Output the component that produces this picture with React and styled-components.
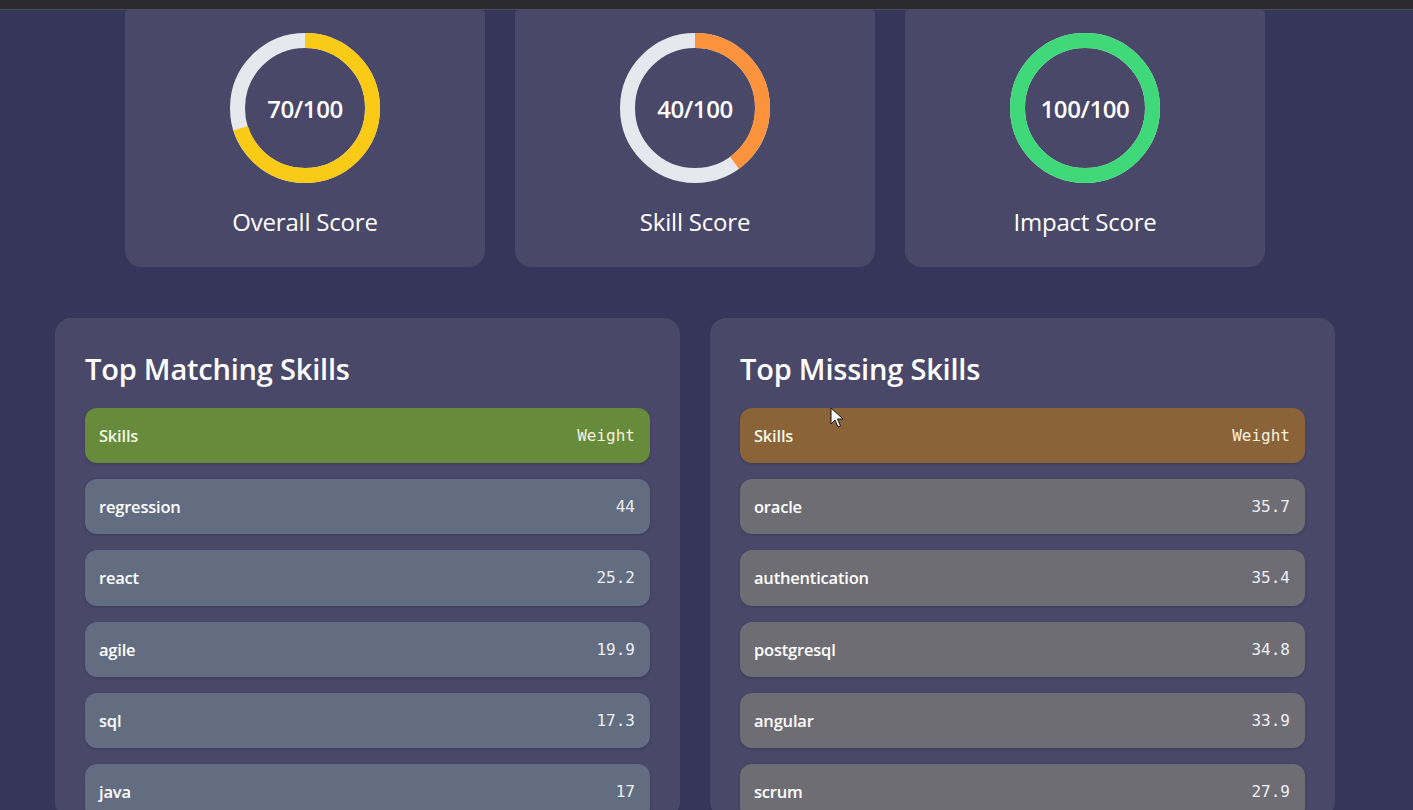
import styled, { createGlobalStyle } from "styled-components";

const GlobalStyle = createGlobalStyle`
  html, body {
    margin: 0;
    padding: 0;
    background: #36355a;
    overflow: hidden;
  }
  body {
    font-family: "Open Sans", "Noto Sans", sans-serif;
    color: #f4f4f6;
  }
`;

const TopBar = styled.div`
  height: 9px;
  background: #2b2b2e;
  border-bottom: 1px solid #4b4b52;
`;

const Page = styled.main`
  position: relative;
  width: 1390px;
  height: 800px;
  display: flex;
  flex-direction: column;
  align-items: center;
`;

const ScoreRow = styled.section`
  display: flex;
  gap: 30px;
`;

const ScoreCard = styled.div`
  width: 360px;
  box-sizing: border-box;
  padding: 23px 0 28px;
  background: #4a4869;
  border-radius: 4px 4px 16px 16px;
  display: flex;
  flex-direction: column;
  align-items: center;
`;

const RingWrap = styled.div`
  position: relative;
  width: 150px;
  height: 150px;
  display: flex;
  align-items: center;
  justify-content: center;
`;

const RingSvg = styled.svg`
  position: absolute;
  inset: 0;
  transform: rotate(-90deg);
`;

const ScoreValue = styled.span`
  position: relative;
  font-size: 24px;
  font-weight: 600;
  letter-spacing: -0.4px;
  color: #ffffff;
`;

const ScoreLabel = styled.div`
  margin-top: 22px;
  font-size: 24px;
  line-height: 34px;
  letter-spacing: -0.2px;
  color: #ffffff;
`;

const Panels = styled.section`
  margin-top: 51px;
  display: flex;
  gap: 30px;
`;

const Panel = styled.div`
  width: 625px;
  box-sizing: border-box;
  padding: 30px 30px 0;
  height: 500px;
  background: #4a4869;
  border-radius: 16px;
`;

const PanelTitle = styled.h2`
  margin: 0 0 18px;
  font-size: 29px;
  line-height: 42px;
  font-weight: 600;
  letter-spacing: -0.2px;
  color: #ffffff;
`;

const List = styled.div`
  display: flex;
  flex-direction: column;
  gap: 16px;
`;

const Row = styled.div`
  height: ${(p) => (p.$head ? "55px" : "55.3px")};
  box-sizing: border-box;
  padding: 0 15px 0 14px;
  display: flex;
  align-items: center;
  justify-content: space-between;
  border-radius: 12px;
  background: ${(p) => p.$bg};
  box-shadow: 0 1px 3px rgba(20, 20, 40, 0.25);
`;

const Name = styled.span`
  font-size: 16.5px;
  font-weight: 600;
  letter-spacing: -0.2px;
  color: ${(p) => (p.$head ? "#f1f6e4" : "#ffffff")};
`;

const Weight = styled.span`
  font-family: "DejaVu Sans Mono", "Liberation Mono", monospace;
  font-size: 16px;
  color: ${(p) => (p.$head ? "#f6f1df" : "#eeeef2")};
`;

const Cursor = styled.svg`
  position: absolute;
  left: 830px;
  top: 397px;
`;

const scores = [
  { value: 70, label: "Overall Score", color: "#f9ca16" },
  { value: 40, label: "Skill Score", color: "#fb923c" },
  { value: 100, label: "Impact Score", color: "#3fd97a" },
];

const matching = [
  ["regression", "44"],
  ["react", "25.2"],
  ["agile", "19.9"],
  ["sql", "17.3"],
  ["java", "17"],
];

const missing = [
  ["oracle", "35.7"],
  ["authentication", "35.4"],
  ["postgresql", "34.8"],
  ["angular", "33.9"],
  ["scrum", "27.9"],
];

function Ring({ value, color }) {
  const r = 67.5;
  const c = 2 * Math.PI * r;
  return (
    <RingSvg width="150" height="150" viewBox="0 0 150 150">
      <circle cx="75" cy="75" r={r} fill="none" stroke="#e7e7ee" strokeWidth="15" />
      <circle
        cx="75"
        cy="75"
        r={r}
        fill="none"
        stroke={color}
        strokeWidth="15"
        strokeDasharray={`${(c * value) / 100} ${c}`}
      />
    </RingSvg>
  );
}

function SkillPanel({ title, head, row, items }) {
  return (
    <Panel>
      <PanelTitle>{title}</PanelTitle>
      <List>
        <Row $bg={head} $head>
          <Name $head>Skills</Name>
          <Weight $head>Weight</Weight>
        </Row>
        {items.map(([name, w]) => (
          <Row key={name} $bg={row}>
            <Name>{name}</Name>
            <Weight>{w}</Weight>
          </Row>
        ))}
      </List>
    </Panel>
  );
}

export default function App() {
  return (
    <>
      <GlobalStyle />
      <TopBar />
      <Page>
        <ScoreRow>
          {scores.map((s) => (
            <ScoreCard key={s.label}>
              <RingWrap>
                <Ring value={s.value} color={s.color} />
                <ScoreValue>{s.value}/100</ScoreValue>
              </RingWrap>
              <ScoreLabel>{s.label}</ScoreLabel>
            </ScoreCard>
          ))}
        </ScoreRow>
        <Panels>
          <SkillPanel
            title="Top Matching Skills"
            head="#668b3a"
            row="#626d81"
            items={matching}
          />
          <SkillPanel
            title="Top Missing Skills"
            head="#8b6339"
            row="#6f6d74"
            items={missing}
          />
        </Panels>
        <Cursor width="14" height="22" viewBox="0 0 14 22">
          <path d="M1 1 L1 17 L5 13 L8 20 L10.5 19 L7.5 12 L13 12 Z" fill="#ffffff" stroke="#111" strokeWidth="1" />
        </Cursor>
      </Page>
    </>
  );
}
